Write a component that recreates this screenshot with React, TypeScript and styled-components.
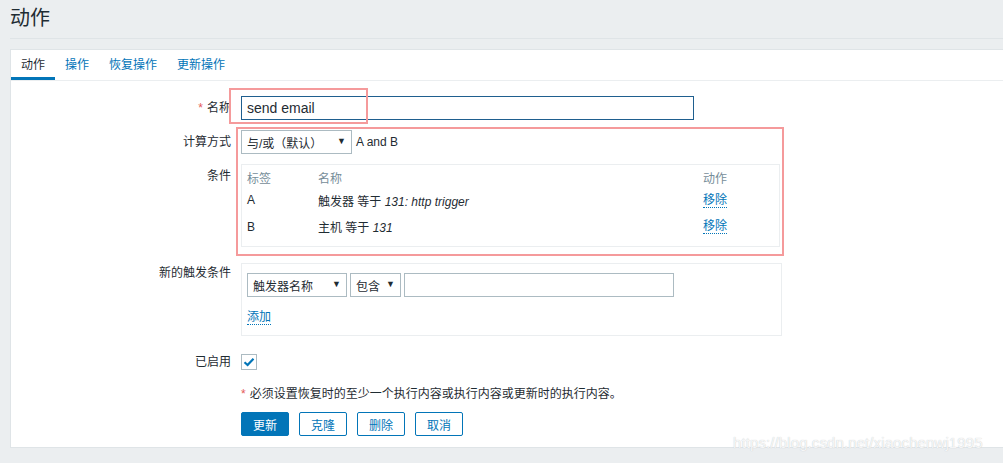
import React from "react";
import styled, { createGlobalStyle } from "styled-components";

const Global = createGlobalStyle`
  html, body { margin: 0; padding: 0; background: #ebeef0; }
  body {
    font-family: "Liberation Sans", Arial, "Noto Sans CJK SC", sans-serif;
    font-size: 12px;
    color: #1f2c33;
  }
  * { box-sizing: border-box; }
`;

const Page = styled.div`
  position: relative;
  width: 1003px;
  height: 463px;
  overflow: hidden;
`;

const Header = styled.header`
  margin: 0 0 0 10px;
  height: 39px;
  border-bottom: 1px solid #dfe4e7;
  display: flex;
  align-items: center;
`;

const Title = styled.h1`
  margin: 0;
  font-size: 20px;
  font-weight: normal;
  color: #1f2c33;
  line-height: 24px;
  padding-bottom: 3px;
`;

const Card = styled.section`
  margin: 10px 0 0 10px;
  background: #fff;
  border: 1px solid #dfe4e7;
  border-right: none;
  padding-bottom: 11px;
`;

const TabBar = styled.nav`
  display: flex;
  height: 31px;
  border-bottom: 1px solid #ebeef0;
`;

const Tab = styled.div<{ $active?: boolean }>`
  padding: 0 10px;
  display: flex;
  align-items: center;
  color: ${(p) => (p.$active ? "#1f2c33" : "#0275b8")};
  border-bottom: 3px solid ${(p) => (p.$active ? "#0275b8" : "transparent")};
`;

const Form = styled.div`
  display: flex;
  flex-direction: column;
`;

const Row = styled.div<{ $mt: number }>`
  display: grid;
  grid-template-columns: 220px 1fr;
  column-gap: 10px;
  margin-top: ${(p) => p.$mt}px;
`;

const Label = styled.div<{ $h?: number }>`
  text-align: right;
  line-height: ${(p) => p.$h ?? 24}px;
  white-space: nowrap;
`;

const Req = styled.span`
  color: #e45959;
  margin-right: 4px;
`;

const Field = styled.div<{ $gap?: number }>`
  display: flex;
  align-items: center;
  gap: ${(p) => p.$gap ?? 4}px;
`;

const TextInput = styled.div<{ $w: number; $focus?: boolean }>`
  width: ${(p) => p.$w}px;
  height: 24px;
  border: 1px solid ${(p) => (p.$focus ? "#1f5f8f" : "#acbbc2")};
  padding: 0 5px;
  display: flex;
  align-items: center;
  background: #fff;
  font-size: 14px;
`;

const Select = styled.div<{ $w: number }>`
  width: ${(p) => p.$w}px;
  height: 24px;
  border: 1px solid #acbbc2;
  padding: 0 5px;
  display: flex;
  align-items: center;
  justify-content: space-between;
  background: #fff;
`;

const Arrow = styled.span`
  font-size: 9px;
  color: #1f2c33;
  margin-top: -3px;
`;

const CondBox = styled.div`
  width: 539px;
  border: 1px solid #ebeef0;
  padding: 0 5px 4px 5px;
`;

const CondRow = styled.div<{ $h: number }>`
  display: grid;
  grid-template-columns: 71px 385px 1fr;
  height: ${(p) => p.$h}px;
  align-items: center;
`;

const HeadCell = styled.div`
  color: #768d99;
`;

const Cell = styled.div``;

const Ital = styled.i``;

const Link = styled.span`
  color: #0275b8;
  border-bottom: 1px dotted #0275b8;
  line-height: 14px;
  justify-self: start;
`;

const NewBox = styled.div`
  width: 541px;
  height: 73px;
  border: 1px solid #ebeef0;
  padding: 9px 5px 0 5px;
  display: flex;
  flex-direction: column;
  align-items: flex-start;
  gap: 13px;
`;

const Check = styled.div`
  width: 16px;
  height: 16px;
  border: 1px solid #acbbc2;
  display: flex;
  align-items: center;
  justify-content: center;
`;

const Note = styled.div`
  line-height: 14px;
`;

const Buttons = styled.div`
  display: flex;
  gap: 10px;
`;

const Button = styled.button<{ $primary?: boolean }>`
  width: 48px;
  height: 24px;
  border: 1px solid #0275b8;
  border-radius: 2px;
  background: ${(p) => (p.$primary ? "#0275b8" : "#fff")};
  color: ${(p) => (p.$primary ? "#fff" : "#0275b8")};
  font-family: inherit;
  font-size: 12px;
  padding: 0;
`;

const Annot = styled.div<{ $x: number; $y: number; $w: number; $h: number }>`
  position: absolute;
  left: ${(p) => p.$x}px;
  top: ${(p) => p.$y}px;
  width: ${(p) => p.$w}px;
  height: ${(p) => p.$h}px;
  border: 2px solid #f59a9b;
  pointer-events: none;
`;

const Watermark = styled.div`
  position: absolute;
  left: 733px;
  top: 434px;
  font-size: 15px;
  font-family: "Liberation Sans", Arial, sans-serif;
  color: rgba(255, 255, 255, 0.85);
  text-shadow: 0 0 1px #b9bec2;
  letter-spacing: 0.1px;
`;

export default function App() {
  return (
    <Page>
      <Global />
      <Header>
        <Title>动作</Title>
      </Header>
      <Card>
        <TabBar>
          <Tab $active>动作</Tab>
          <Tab>操作</Tab>
          <Tab>恢复操作</Tab>
          <Tab>更新操作</Tab>
        </TabBar>
        <Form>
          <Row $mt={15}>
            <Label>
              <Req>*</Req>名称
            </Label>
            <Field>
              <TextInput $w={453} $focus>send email</TextInput>
            </Field>
          </Row>
          <Row $mt={10}>
            <Label>计算方式</Label>
            <Field>
              <Select $w={111}>
                <span>与/或（默认）</span>
                <Arrow>▼</Arrow>
              </Select>
              <span>A and B</span>
            </Field>
          </Row>
          <Row $mt={10}>
            <Label>条件</Label>
            <CondBox>
              <CondRow $h={24}>
                <HeadCell>标签</HeadCell>
                <HeadCell>名称</HeadCell>
                <HeadCell>动作</HeadCell>
              </CondRow>
              <CondRow $h={22}>
                <Cell>A</Cell>
                <Cell>
                  触发器 等于 <Ital>131: http trigger</Ital>
                </Cell>
                <Link>移除</Link>
              </CondRow>
              <CondRow $h={31}>
                <Cell>B</Cell>
                <Cell>
                  主机 等于 <Ital>131</Ital>
                </Cell>
                <Link>移除</Link>
              </CondRow>
            </CondBox>
          </Row>
          <Row $mt={16}>
            <Label $h={20}>新的触发条件</Label>
            <NewBox>
              <Field $gap={3}>
                <Select $w={100}>
                  <span>触发器名称</span>
                  <Arrow>▼</Arrow>
                </Select>
                <Select $w={51}>
                  <span>包含</span>
                  <Arrow>▼</Arrow>
                </Select>
                <TextInput $w={270} />
              </Field>
              <Link>添加</Link>
            </NewBox>
          </Row>
          <Row $mt={18}>
            <Label $h={16}>已启用</Label>
            <Field>
              <Check>
                <svg width="12" height="10" viewBox="0 0 12 10">
                  <path d="M1.5 5.2 L4.6 8 L10.5 1.8" fill="none" stroke="#0275b8" strokeWidth="2.2" />
                </svg>
              </Check>
            </Field>
          </Row>
          <Row $mt={17}>
            <span />
            <Note>
              <Req>*</Req>必须设置恢复时的至少一个执行内容或执行内容或更新时的执行内容。
            </Note>
          </Row>
          <Row $mt={11}>
            <span />
            <Buttons>
              <Button $primary>更新</Button>
              <Button>克隆</Button>
              <Button>删除</Button>
              <Button>取消</Button>
            </Buttons>
          </Row>
        </Form>
      </Card>
      <Annot $x={229} $y={88} $w={139} $h={36} />
      <Annot $x={236} $y={127} $w={548} $h={129} />
      <Watermark>https://blog.csdn.net/xiaochenwj1995</Watermark>
    </Page>
  );
}
